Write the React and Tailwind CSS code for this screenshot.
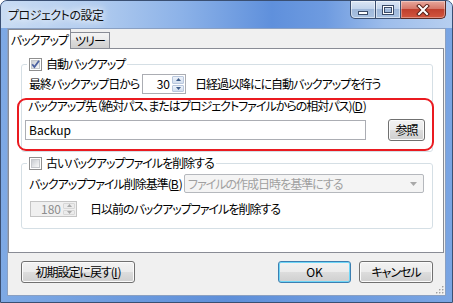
import React from "react";

const F = "font-['Noto_Sans_CJK_JP','Noto_Sans_CJK_SC',sans-serif] [font-feature-settings:'palt']";

function Check({ checked }) {
  return (
    <span className="w-[13px] h-[13px] border border-[#8f8f8f] bg-white flex items-center justify-center shrink-0">
      <span className="w-[9px] h-[9px] border border-[#c5c8cc] bg-[linear-gradient(135deg,#c9ccd1_0%,#e6e8ea_60%,#f8f8f8_100%)] flex items-center justify-center">
        {checked && (
          <svg width="9" height="9" viewBox="0 0 9 9" className="overflow-visible">
            <path d="M1.2 4.2 L3.4 7 L8 0.8" fill="none" stroke="#4c61a0" strokeWidth="1.8" />
          </svg>
        )}
      </span>
    </span>
  );
}

function Arrow({ up, color }) {
  return (
    <svg width="5" height="3" viewBox="0 0 5 3">
      <path d={up ? "M0 3 L2.5 0 L5 3 Z" : "M0 0 L5 0 L2.5 3 Z"} fill={color} />
    </svg>
  );
}

function Spin({ value, disabled, w, h }) {
  const arrow = disabled ? "#a9a9a9" : "#3f5d8a";
  return (
    <div
      className={`flex ${w} ${h} border ${disabled ? "border-[#c4c4c4] bg-[#f0f0f0] text-[#8d8d8d]" : "border-[#abadb3] bg-white text-black"}`}
    >
      <div className="flex-1 flex items-center justify-end pr-[2px] tracking-normal">{value}</div>
      <div className="w-[13px] flex flex-col py-[1px] pr-[1px] gap-[1px]">
        <div className={`flex-1 flex items-center justify-center rounded-[1px] border ${disabled ? "border-[#d7d7d7] bg-[#ececec]" : "border-[#b9c7dd] bg-[linear-gradient(#eef3fa,#d2deee)]"}`}>
          <Arrow up color={arrow} />
        </div>
        <div className={`flex-1 flex items-center justify-center rounded-[1px] border ${disabled ? "border-[#d7d7d7] bg-[#ececec]" : "border-[#b9c7dd] bg-[linear-gradient(#eef3fa,#d2deee)]"}`}>
          <Arrow color={arrow} />
        </div>
      </div>
    </div>
  );
}

function Btn({ children, className = "", def }) {
  return (
    <div
      className={`h-[22px] rounded-[3px] border flex items-center justify-center ${
        def
          ? "border-[#3c7fb1] shadow-[inset_0_0_0_1px_#6fd6f7] bg-[linear-gradient(#f2f2f2_0%,#ebebeb_50%,#dddddd_50%,#cfcfcf_100%)]"
          : "border-[#707070] shadow-[inset_0_0_0_1px_#fbfbfb] bg-[linear-gradient(#f2f2f2_0%,#ebebeb_50%,#dddddd_50%,#cfcfcf_100%)]"
      } ${className}`}
    >
      {children}
    </div>
  );
}

export default function App() {
  return (
    <div
      className={`w-[453px] h-[303px] relative overflow-hidden whitespace-nowrap tracking-[-1px] rounded-t-[7px] border border-[#3a4f72] bg-[linear-gradient(to_right,#7ea9e4_0%,#5e8fd9_50%,#7aa5e3_100%)] text-[12px] leading-[14px] text-black ${F}`}
    >
      {/* title bar */}
      <div className="h-[27px] flex items-start bg-[linear-gradient(to_right,#c9dcf3_0%,#b3cdef_20%,#8cb2e8_40%,#5f90dc_60%,#6e9be0_72%,#9dbdeb_85%,#b7cff0_100%)]">
        <div className="mt-[7px] ml-[7px] tracking-[-0.5px] text-[#101010] [text-shadow:0_0_6px_#ffffff,0_0_10px_#ffffff]">
          プロジェクトの設定
        </div>
        <div className="ml-auto mr-[6px] flex h-[18px]">
          <div className="w-[26px] h-full border border-[#3b4f70] border-t-0 rounded-bl-[5px] bg-[linear-gradient(#dbe6f4_0%,#c2d4ec_45%,#9fb8da_50%,#a9c2e2_100%)] flex items-center justify-center shadow-[inset_0_0_0_1px_rgba(255,255,255,0.5)]">
            <svg width="12" height="12" viewBox="0 0 12 12">
              <rect x="1.5" y="7.5" width="9" height="3" fill="#fff" stroke="#3a4a66" />
            </svg>
          </div>
          <div className="w-[25px] h-full border-b border-r border-[#3b4f70] bg-[linear-gradient(#dbe6f4_0%,#c2d4ec_45%,#9fb8da_50%,#a9c2e2_100%)] flex items-center justify-center shadow-[inset_0_0_0_1px_rgba(255,255,255,0.5)]">
            <svg width="12" height="10" viewBox="0 0 12 10">
              <rect x="1.5" y="1.5" width="9" height="7" fill="none" stroke="#3a4a66" strokeWidth="3" />
              <rect x="1.5" y="1.5" width="9" height="7" fill="none" stroke="#fff" strokeWidth="1" />
            </svg>
          </div>
          <div className="w-[45px] h-full border border-l-0 border-t-0 border-[#5a2a24] rounded-br-[5px] bg-[linear-gradient(#e8a89c_0%,#d6786a_45%,#c0402e_50%,#d2563f_100%)] flex items-center justify-center shadow-[inset_0_0_0_1px_rgba(255,255,255,0.35)]">
            <svg width="14" height="12" viewBox="0 0 14 12">
              <path d="M3 2 L11 10 M11 2 L3 10" stroke="#5a2018" strokeWidth="4" strokeLinecap="square" />
              <path d="M3 2 L11 10 M11 2 L3 10" stroke="#fff" strokeWidth="2" strokeLinecap="square" />
            </svg>
          </div>
        </div>
      </div>

      {/* client */}
      <div className="ml-[6px] w-[439px] h-[268px] border border-[#8aa0c2] bg-[#f0f0f0] relative flex flex-col">
        {/* tabs */}
        <div className="h-[20px] flex items-end">
          <div className="relative z-10 w-[63px] h-[20px] bg-white border border-b-0 border-[#898c95] flex items-center justify-center">
            バックアップ
          </div>
          <div className="-ml-[1px] w-[40px] h-[17px] border border-[#898c95] bg-[linear-gradient(#f4f4f4_0%,#ebebeb_50%,#dcdcdc_50%,#cfcfcf_100%)] flex items-center justify-center">
            ツリー
          </div>
        </div>

        {/* panel */}
        <div className="relative -mt-[1px] w-[436px] h-[205px] border border-[#898c95] bg-white flex flex-col">
          {/* group 1 */}
          <fieldset className="mt-[8px] ml-[12px] w-[412px] border border-[#d5dfe5] rounded-[3px] pb-[10px]">
            <legend className="ml-[5px] px-[2px] flex items-center gap-[4px] h-[14px]">
              <Check checked />
              <span>自動バックアップ</span>
            </legend>
            <div className="mt-[3px] pl-[7px] h-[20px] flex items-center">
              <span className="w-[108px]">最終バックアップ日から</span>
              <div className="ml-[5px]">
                <Spin value="30" w="w-[44px]" h="h-[20px]" />
              </div>
              <span className="ml-[9px]">日経過以降にに自動バックアップを行う</span>
            </div>
            <div className="mt-[5px] pl-[6px] h-[14px] flex items-center">
              バックアップ先（絶対パス、またはプロジェクトファイルからの相対パス)(<span className="underline tracking-normal">D</span>)
            </div>
            <div className="mt-[6px] pl-[3px] h-[22px] flex items-center">
              <div className="w-[341px] h-[20px] border border-[#abadb3] bg-white flex items-center pl-[3px] text-black tracking-normal">
                Backup
              </div>
              <Btn className="ml-[22px] w-[37px]">参照</Btn>
            </div>
          </fieldset>

          {/* group 2 */}
          <fieldset className="mt-[4px] ml-[12px] w-[412px] border border-[#d5dfe5] rounded-[3px] pb-[11px]">
            <legend className="ml-[5px] px-[2px] flex items-center gap-[4px] h-[14px]">
              <Check />
              <span>古いバックアップファイルを削除する</span>
            </legend>
            <div className="mt-[4px] pl-[7px] pr-[8px] h-[19px] flex items-center">
              <span>
                バックアップファイル削除基準(<span className="underline tracking-normal">B</span>)
              </span>
              <div className="ml-auto w-[240px] h-[19px] border border-[#b5b8bd] rounded-[2px] bg-[#f4f4f4] flex items-center pl-[3px] text-[#a0a0a0]">
                <span>ファイルの作成日時を基準にする</span>
                <span className="ml-auto mr-[6px] flex">
                  <svg width="7" height="4" viewBox="0 0 7 4">
                    <path d="M0 0 L7 0 L3.5 4 Z" fill="#a8a8a8" />
                  </svg>
                </span>
              </div>
            </div>
            <div className="mt-[8px] pl-[8px] h-[16px] flex items-center">
              <Spin value="180" disabled w="w-[47px]" h="h-[16px]" />
              <span className="ml-[13px]">日以前のバックアップファイルを削除する</span>
            </div>
          </fieldset>

          {/* highlight annotation */}
          <div className="absolute left-[8px] top-[49px] w-[417px] h-[53px] border-2 border-[#ea1a20] rounded-[9px] pointer-events-none" />
        </div>

        {/* bottom buttons */}
        <div className="mt-[8px] flex pl-[13px] pr-[12px]">
          <Btn className="w-[114px]">
            初期設定に戻す(<span className="underline tracking-normal">I</span>)
          </Btn>
          <Btn def className="ml-auto w-[73px] tracking-normal">
            OK
          </Btn>
          <Btn className="ml-[8px] w-[74px]">キャンセル</Btn>
        </div>

        {/* resize grip */}
        <svg className="absolute right-[1px] bottom-[1px]" width="10" height="10" viewBox="0 0 10 10">
          {[
            [8, 2],
            [8, 5],
            [5, 5],
            [8, 8],
            [5, 8],
            [2, 8],
          ].map(([x, y], i) => (
            <g key={i}>
              <rect x={x} y={y} width="1.5" height="1.5" fill="#ffffff" transform="translate(0.6,0.6)" />
              <rect x={x} y={y} width="1.5" height="1.5" fill="#a0a0a0" />
            </g>
          ))}
        </svg>
      </div>
    </div>
  );
}
